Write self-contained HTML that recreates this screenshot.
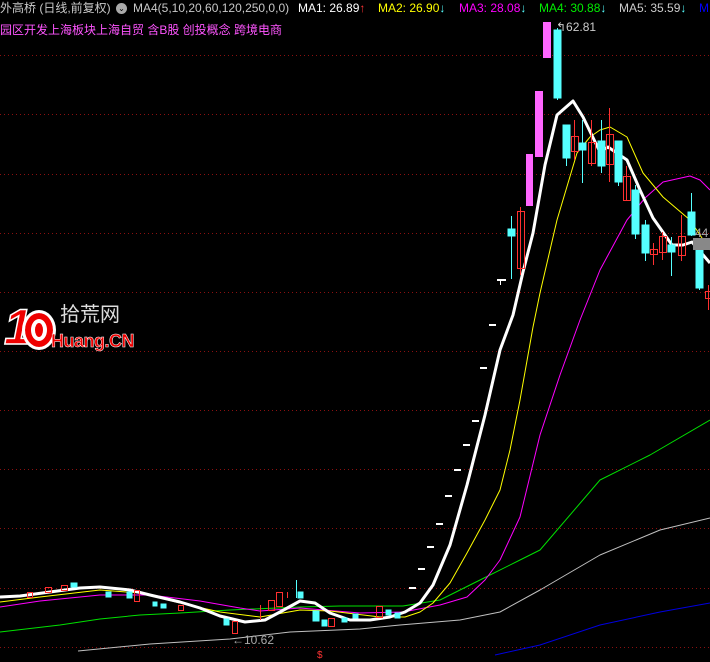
<!DOCTYPE html>
<html><head><meta charset="utf-8"><style>
html,body{margin:0;padding:0;background:#000;width:710px;height:662px;overflow:hidden;position:relative}
.t{position:absolute;font-family:"Liberation Sans","Noto Sans CJK SC",sans-serif;font-size:12px;white-space:nowrap;line-height:14px}
</style></head><body>
<svg width="710" height="662" style="position:absolute;left:0;top:0">
<g stroke="#8b1010" stroke-width="1" stroke-dasharray="1,3">
<line x1="0" y1="55.5" x2="710" y2="55.5"/><line x1="0" y1="114.5" x2="710" y2="114.5"/><line x1="0" y1="174.5" x2="710" y2="174.5"/><line x1="0" y1="233.5" x2="710" y2="233.5"/><line x1="0" y1="292.5" x2="710" y2="292.5"/><line x1="0" y1="351.5" x2="710" y2="351.5"/><line x1="0" y1="410.5" x2="710" y2="410.5"/><line x1="0" y1="469.5" x2="710" y2="469.5"/><line x1="0" y1="528.5" x2="710" y2="528.5"/><line x1="0" y1="588.5" x2="710" y2="588.5"/><line x1="0" y1="647.5" x2="710" y2="647.5"/>
</g>
<g fill="none" stroke-linejoin="round">
<polyline stroke="#0000e0" stroke-width="1" points="495,655 540,645 600,625 660,612 710,603"/>
<polyline stroke="#c0c0c0" stroke-width="1" points="78,651 150,644 230,639 290,632 360,629 400,625 460,620 500,612 540,590 600,555 660,530 710,518"/>
<polyline stroke="#00e000" stroke-width="1" points="0,632 60,625 100,619 140,615 180,613 230,610 300,607 340,606 403,606 440,600 480,580 520,560 540,550 600,480 650,455 710,420"/>
<polyline stroke="#ff00ff" stroke-width="1" points="0,607 40,601 100,595 150,595 200,601 240,608 260,611 300,608 360,613 403,612 440,605 467,597 485,580 500,560 520,517 540,435 560,375 580,320 600,270 627,220 645,198 663,182 690,176 700,180 710,190"/>
<polyline stroke="#ffff00" stroke-width="1" points="0,602 40,597 100,590 140,593 180,603 220,612 260,617 300,610 330,611 380,617 405,617 420,612 433,603 450,583 467,553 485,520 500,490 510,450 520,400 533,327 540,293 557,220 577,153 590,137 600,130 610,127 627,137 643,173 663,197 690,220 710,250"/>
<polyline stroke="#ffffff" stroke-width="3" points="0,597 20,596 50,592 80,588 100,587 130,590 150,595 180,602 200,608 220,616 245,622 265,620 280,612 300,601 315,603 330,613 350,620 370,620 390,617 405,612 420,603 433,585 450,545 467,485 485,415 500,350 513,315 523,272 533,233 545,165 557,115 573,101 583,117 600,152 608,147 627,160 640,190 653,218 672,245 683,245 692,242 710,263"/>
</g>
<g fill="#fff">
<rect x="409" y="587" width="7" height="2"/><rect x="418" y="568" width="7" height="2"/><rect x="427" y="546" width="7" height="2"/><rect x="436" y="523" width="7" height="2"/><rect x="445" y="495" width="7" height="2"/><rect x="454" y="469" width="7" height="2"/><rect x="463" y="444" width="7" height="2"/><rect x="472" y="420" width="7" height="2"/><rect x="480" y="367" width="7" height="2"/><rect x="489" y="324" width="7" height="2"/>
<rect x="497" y="279" width="9" height="2"/><rect x="500" y="280" width="1" height="5"/>
</g>
<g stroke="#ff3030" stroke-width="1" fill="none">
<line x1="520.5" y1="207" x2="520.5" y2="275"/><rect x="517.5" y="211.5" width="7" height="57"/>
<line x1="574.5" y1="120" x2="574.5" y2="160"/><rect x="571.5" y="136.5" width="7" height="15"/>
<line x1="591.5" y1="120" x2="591.5" y2="166"/><rect x="588.5" y="142.5" width="7" height="21"/>
<line x1="609.5" y1="108" x2="609.5" y2="182"/><rect x="606.5" y="134.5" width="7" height="30"/>
<line x1="626.5" y1="166" x2="626.5" y2="200"/><rect x="623.5" y="176.5" width="7" height="24"/>
<line x1="653.5" y1="243" x2="653.5" y2="265"/><rect x="650.5" y="249.5" width="7" height="5"/>
<line x1="662.5" y1="232" x2="662.5" y2="260"/><rect x="659.5" y="236.5" width="7" height="16"/>
<line x1="681.5" y1="215" x2="681.5" y2="261"/><rect x="678.5" y="236.5" width="7" height="19"/>
<line x1="708.5" y1="285" x2="708.5" y2="310"/><rect x="705.5" y="291.5" width="7" height="7"/>
<rect x="45.5" y="587.5" width="6" height="5"/><rect x="61.5" y="585.5" width="6" height="5"/><rect x="27.5" y="592.5" width="5" height="5"/>
<rect x="134.5" y="590.5" width="5" height="11"/><rect x="178.5" y="605.5" width="5" height="5"/><rect x="232.5" y="621.5" width="5" height="12"/>
<rect x="268.5" y="600.5" width="6" height="10"/><rect x="276.5" y="592.5" width="6" height="14"/><rect x="328.5" y="618.5" width="6" height="8"/><rect x="376.5" y="606.5" width="6" height="11"/>
<line x1="287.5" y1="592" x2="287.5" y2="598"/><line x1="260.5" y1="605" x2="260.5" y2="620"/>
</g>
<g fill="#ff66ff">
<rect x="526" y="154" width="7" height="52"/><rect x="535" y="91" width="8" height="66"/><rect x="543" y="22" width="8" height="36"/>
</g>
<g fill="#55ffff" stroke="#55ffff" stroke-width="1">
<line x1="511.5" y1="216" x2="511.5" y2="279"/><rect x="508" y="229" width="7" height="7"/>
<line x1="557.5" y1="28" x2="557.5" y2="100"/><rect x="554" y="30" width="7" height="68"/>
<line x1="566.5" y1="125" x2="566.5" y2="166"/><rect x="563" y="125" width="7" height="33"/>
<line x1="582.5" y1="120" x2="582.5" y2="183"/><rect x="579" y="143" width="7" height="7"/>
<line x1="601.5" y1="120" x2="601.5" y2="173"/><rect x="598" y="141" width="7" height="25"/>
<line x1="618.5" y1="141" x2="618.5" y2="186"/><rect x="615" y="141" width="7" height="41"/>
<line x1="635.5" y1="185" x2="635.5" y2="239"/><rect x="632" y="190" width="7" height="44"/>
<line x1="645.5" y1="220" x2="645.5" y2="261"/><rect x="642" y="225" width="7" height="28"/>
<line x1="671.5" y1="237" x2="671.5" y2="276"/><rect x="668" y="245" width="7" height="7"/>
<line x1="691.5" y1="193" x2="691.5" y2="236"/><rect x="688" y="212" width="7" height="23"/>
<line x1="699.5" y1="245" x2="699.5" y2="290"/><rect x="696" y="245" width="7" height="43"/>
<rect x="71" y="583" width="6" height="4"/><rect x="106" y="592" width="5" height="5"/><rect x="127" y="592" width="5" height="6"/><rect x="153" y="602" width="4" height="4"/>
<rect x="161" y="604" width="5" height="4"/><rect x="224" y="619" width="5" height="6"/><rect x="298" y="592" width="5" height="6"/><line x1="296.5" y1="580" x2="296.5" y2="598"/>
<rect x="313" y="611" width="6" height="10"/><rect x="322" y="620" width="5" height="6"/><rect x="342" y="618" width="5" height="4"/><rect x="353" y="614" width="5" height="4"/><rect x="386" y="610" width="5" height="5"/><rect x="395" y="613" width="5" height="5"/>
</g>
<rect x="693" y="238" width="17" height="12" fill="#888"/>
</svg>
<div class="t" style="left:0;top:1px;color:#c8c8c8">外高桥 (日线,前复权)</div>
<div style="position:absolute;left:116px;top:3px;width:11px;height:11px;border-radius:50%;background:#aaa;color:#000;font-size:8px;line-height:11px;text-align:center;font-family:'DejaVu Sans'">⌄</div>
<div class="t" style="left:133px;top:1px;color:#c8c8c8">MA4(5,10,20,60,120,250,0,0)</div>
<div class="t" style="left:298px;top:1px;color:#fff">MA1: 26.89<span style="color:#f33">↑</span></div>
<div class="t" style="left:378px;top:1px;color:#ff0">MA2: 26.90<span style="color:#5ff">↓</span></div>
<div class="t" style="left:459px;top:1px;color:#f0f">MA3: 28.08<span style="color:#5ff">↓</span></div>
<div class="t" style="left:539px;top:1px;color:#0e0">MA4: 30.88<span style="color:#5ff">↓</span></div>
<div class="t" style="left:619px;top:1px;color:#ccc">MA5: 35.59<span style="color:#5ff">↓</span></div>
<div class="t" style="left:699px;top:1px;color:#00f">M</div>
<div class="t" style="left:0;top:23px;color:#ff55ff">园区开发上海板块上海自贸 含B股 创投概念 跨境电商</div>
<div class="t" style="left:556px;top:20px;color:#ccc">↰62.81</div>
<div class="t" style="left:695px;top:226px;color:#aaa">44</div>
<div class="t" style="left:232px;top:633px;color:#aaa">←10.62</div>
<div class="t" style="left:317px;top:649px;color:#f33;font-size:10px">$</div>
<div style="position:absolute;left:4px;top:302px;font-family:'Liberation Sans',sans-serif;font-weight:bold;font-style:italic;font-size:50px;line-height:50px;color:#e00;-webkit-text-stroke:1.5px #fff">1</div>
<div style="position:absolute;left:22px;top:310px;width:34px;height:40px;border-radius:50%;background:#e00;border:3px solid #fff;box-sizing:border-box;box-shadow:inset 0 0 0 6px #e00,inset 0 0 0 10px #fff,inset 0 0 0 14px #e00"></div>
<div class="t" style="left:60px;top:304px;font-size:20px;line-height:22px;color:#ddd">拾荒网</div>
<div class="t" style="left:51px;top:331px;font-size:18px;line-height:20px;color:#e00;font-weight:bold;-webkit-text-stroke:0.5px #fff;letter-spacing:-0.5px">Huang.CN</div>
</body></html>
